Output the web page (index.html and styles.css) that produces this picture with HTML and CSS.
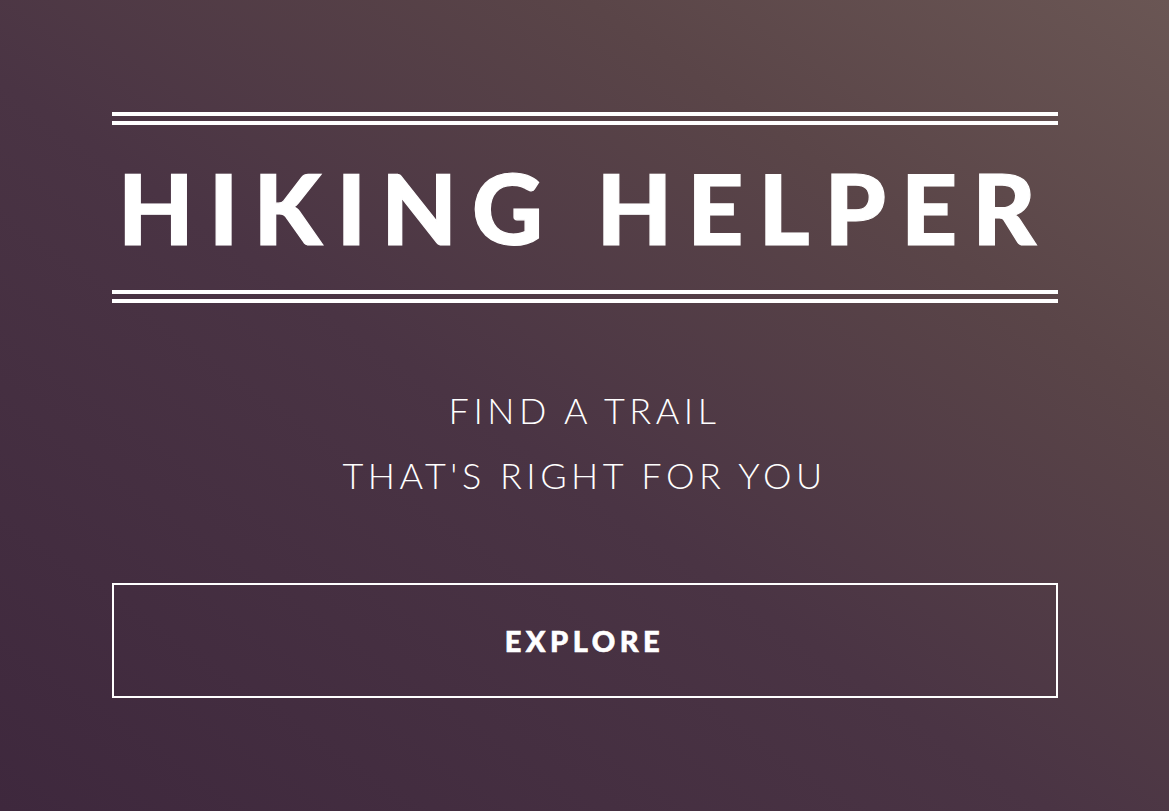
FILE: index.html
```html
<!DOCTYPE html>
<html lang="en">
<head>
<meta charset="utf-8">
<title>Hiking Helper</title>
<link rel="stylesheet" href="styles.css">
</head>
<body>
<main class="hero">
  <div class="wrap">
    <header class="masthead">
      <div class="rule"></div>
      <h1 class="title">HIKING HELPER</h1>
      <div class="rule"></div>
    </header>
    <p class="tagline">FIND A TRAIL<br>THAT'S RIGHT FOR YOU</p>
    <a class="explore" href="#">EXPLORE</a>
  </div>
</main>
</body>
</html>
```
FILE: styles.css
```css
html, body {
  margin: 0;
  padding: 0;
  height: 100%;
}
body {
  font-family: Lato, "Open Sans", sans-serif;
  color: #fff;
  background: linear-gradient(to top right, #3e283d 0%, #4a3444 45%, #5a4548 75%, #6a5654 100%);
  overflow: hidden;
}
.hero {
  min-height: 811px;
}
.wrap {
  width: 946px;
  margin: 0 auto;
  padding-top: 112px;
  display: flex;
  flex-direction: column;
}
.masthead {
  display: flex;
  flex-direction: column;
}
.rule {
  height: 5px;
  border-top: 4px solid #fff;
  border-bottom: 4px solid #fff;
}
.title {
  margin: 0;
  font-family: Lato, sans-serif;
  font-weight: 900;
  font-size: 98px;
  letter-spacing: 15px;
  line-height: 165px;
  text-align: center;
  white-space: nowrap;
  -webkit-text-stroke: 1.2px #fff;
}
.tagline {
  margin: 75px 0 0;
  font-weight: 300;
  font-size: 36px;
  letter-spacing: 4.5px;
  line-height: 65px;
  text-align: center;
}
.explore {
  margin-top: 75px;
  height: 111px;
  border: 2px solid #fff;
  display: flex;
  align-items: center;
  justify-content: center;
  color: #fff;
  text-decoration: none;
  font-weight: 900;
  font-size: 29px;
  letter-spacing: 4.5px;
  -webkit-text-stroke: 0.6px #fff;
}
```
